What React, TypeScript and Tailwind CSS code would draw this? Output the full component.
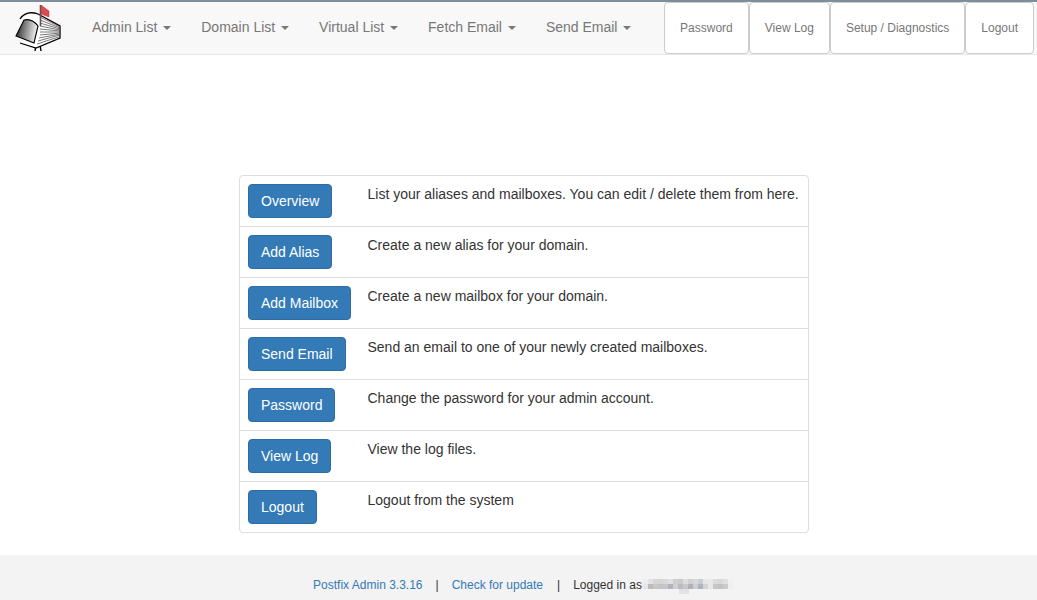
const leftNav = ['Admin List', 'Domain List', 'Virtual List', 'Fetch Email', 'Send Email']
const rightNav = ['Password', 'View Log', 'Setup / Diagnostics', 'Logout']

const rows = [
  { label: 'Overview', text: 'List your aliases and mailboxes. You can edit / delete them from here.' },
  { label: 'Add Alias', text: 'Create a new alias for your domain.' },
  { label: 'Add Mailbox', text: 'Create a new mailbox for your domain.' },
  { label: 'Send Email', text: 'Send an email to one of your newly created mailboxes.' },
  { label: 'Password', text: 'Change the password for your admin account.' },
  { label: 'View Log', text: 'View the log files.' },
  { label: 'Logout', text: 'Logout from the system' },
]

// blurred-out user name in the footer, two rows of 5px blocks
const blurTop = ['#eeeeee', '#e2e2e2', '#d4d6d8', '#d8d4d2', '#d5dade', '#e0e0e0', '#cfcdd0', '#cacacc', '#dddddd', '#d0d0d2', '#d6d8da', '#c9ced4', '#e6e6e6', '#e8e8e8', '#dcdcdc', '#d8d8d8', '#e0e0e0', '#f0f0f0']
const blurBottom = ['#e6e6e6', '#bdbbbb', '#c5c9cc', '#c9c3c0', '#c0c8ce', '#b4b4b8', '#d2d0d2', '#bcbcc0', '#c8c8c8', '#b0b2b6', '#cfcfcf', '#acb6be', '#d4d4d4', '#e8e8e8', '#c6c6c6', '#c2c2c2', '#cbcbcb', '#eeeeee']

function Logo() {
  return (
    <svg width="48" height="50" viewBox="0 0 48 50" className="block">
      <defs>
        <linearGradient id="door" x1="0" y1="0" x2="1" y2="0.15">
          <stop offset="0" stopColor="#1c1c1c" />
          <stop offset="0.5" stopColor="#8a8a8a" />
          <stop offset="1" stopColor="#f2f2f2" />
        </linearGradient>
      </defs>
      <path d="M21 49 L22 43 L26 43 L27 49" fill="#fff" stroke="#000" strokeWidth="1.4" />
      <path d="M6 17 Q12 8 24 12 L46 24 L46 36 L22 46 L6 41" fill="#fff" stroke="#000" strokeWidth="1.3" />
      <path d="M10 18 L2 34 L20 41 L24 24 Q18 16 10 18z" fill="url(#door)" stroke="#000" strokeWidth="1.1" />
      <path
        d="M26 15 L46 25 M26 18 L46 26 M26 21 L46 27 M26 24 L46 28 M26 27 L46 29 M26 30 L46 30 M26 33 L46 31 M25 36 L46 32 M24 39 L46 33 M23 42 L46 34.5"
        stroke="#555"
        strokeWidth="0.8"
        fill="none"
      />
      <path d="M26.5 3 L26.5 24" stroke="#555" strokeWidth="1.6" fill="none" />
      <path d="M27 3 L35 9 L35 15 L27 12z" fill="#dc4a52" stroke="#a83a40" strokeWidth="0.5" />
    </svg>
  )
}

export default function App() {
  return (
    <div className="h-[600px] overflow-hidden bg-white font-['Liberation_Sans',Arial,sans-serif] text-sm text-[#333]">
      {/* Navbar */}
      <nav className="h-[55px] flex justify-between bg-[#f8f8f8] border-t-2 border-t-[#7e8d9a] border-b border-b-[#e7e7e7]">
        <div className="flex">
          <div className="w-[77px] pl-[14px]">
            <Logo />
          </div>
          {leftNav.map((item) => (
            <a key={item} className="flex items-center px-[15px] h-[50px] text-[#777]">
              {item}
              <span className="ml-[5.9px] mt-px w-0 h-0 border-x-4 border-x-transparent border-t-4 border-t-[#777]" />
            </a>
          ))}
        </div>
        <div className="flex mr-[3px]">
          {rightNav.map((item) => (
            <a
              key={item}
              className="flex items-center h-[52px] px-[15px] bg-white border border-[#ccc] rounded text-xs text-[#777]"
            >
              {item}
            </a>
          ))}
        </div>
      </nav>

      {/* Menu table */}
      <main className="h-[500px] pt-[120px] pl-[11px]">
        <div className="w-[570px] h-[358px] mx-auto border border-[#ddd] rounded">
          {rows.map((row, i) => (
            <div key={row.label} className={`flex h-[51px] p-2 ${i < rows.length - 1 ? 'border-b border-[#ddd]' : ''}`}>
              <div className="w-[119.5px] shrink-0">
                <a className="inline-block h-[34px] leading-[32px] px-3 bg-[#337ab7] border border-[#2e6da4] rounded text-white">
                  {row.label}
                </a>
              </div>
              <div className="leading-5">{row.text}</div>
            </div>
          ))}
        </div>
      </main>

      {/* Footer */}
      <footer className="h-[45px] pt-[21px] pl-[11px] bg-[#f3f3f3] text-xs leading-[18px] flex justify-center">
        <a className="text-[#337ab7]">Postfix Admin 3.3.16</a>
        <span className="mx-[13px]">|</span>
        <a className="text-[#337ab7]">Check for update</a>
        <span className="ml-[14px] mr-[13px]">|</span>
        <span>Logged in as</span>
        <svg width="92" height="18" className="ml-px">
          {blurTop.map((color, i) => (
            <rect key={i} x={i * 5} y="3" width="5" height="5" fill={color} />
          ))}
          {blurBottom.map((color, i) => (
            <rect key={i} x={i * 5} y="8" width="5" height="5" fill={color} />
          ))}
          <rect x="36" y="13" width="10" height="5" fill="#e2e2e2" />
        </svg>
      </footer>
    </div>
  )
}
